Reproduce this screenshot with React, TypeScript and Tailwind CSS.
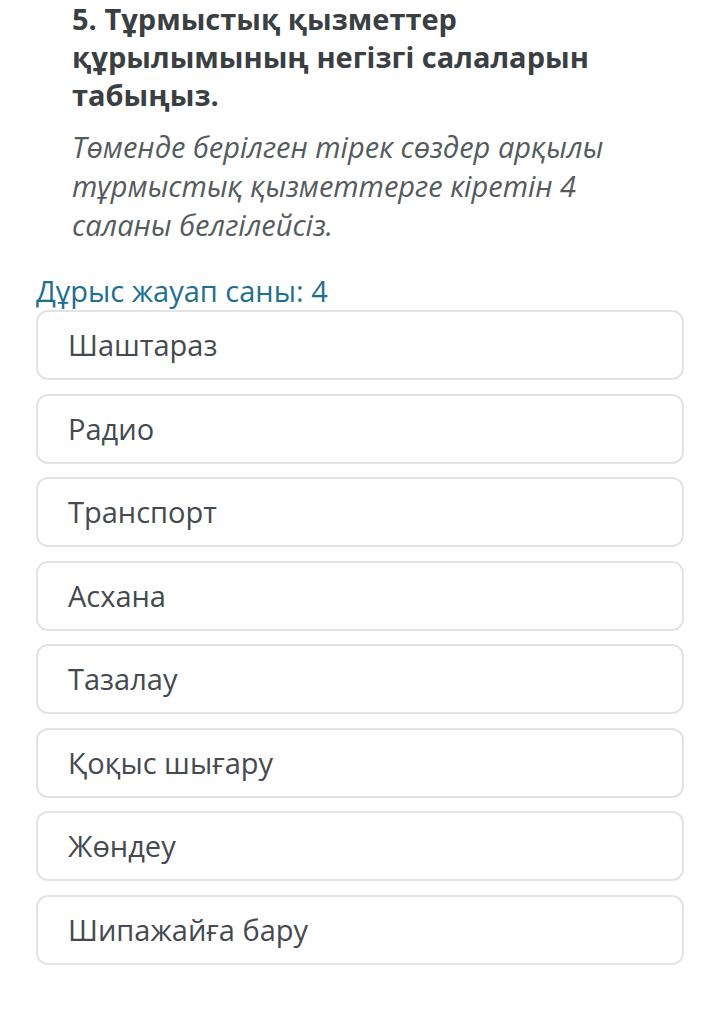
import React from 'react';

const options = [
  'Шаштараз',
  'Радио',
  'Транспорт',
  'Асхана',
  'Тазалау',
  'Қоқыс шығару',
  'Жөндеу',
  'Шипажайға бару',
];

const App: React.FC = () => {
  return (
    <div
      className="min-h-screen w-[720px] bg-white overflow-hidden"
      style={{ fontFamily: '"Open Sans", "Noto Sans", sans-serif' }}
    >
      <div className="pl-[72px] pr-[90px]">
        <h2 className="text-[29px] leading-[38px] font-bold text-[#3a3f44]">
          5. Тұрмыстық қызметтер құрылымының негізгі салаларын табыңыз.
        </h2>
        <p className="mt-[13px] text-[29px] leading-[39px] italic text-[#555a5e]">
          Төменде берілген тірек сөздер арқылы тұрмыстық қызметтерге кіретін 4 саланы белгілейсіз.
        </p>
      </div>
      <div className="px-[36px] mt-[29px]">
        <p className="text-[29px] leading-[36px] text-[#1f6f8e]">Дұрыс жауап саны: 4</p>
        <div className="flex flex-col gap-[13.5px] mt-[1px]">
          {options.map((opt) => (
            <div
              key={opt}
              className="h-[70px] flex items-center pl-[30px] border-2 border-[#e3e3e3] rounded-[12px] text-[29px] text-[#444a4f]"
            >
              {opt}
            </div>
          ))}
        </div>
      </div>
    </div>
  );
};

export default App;
